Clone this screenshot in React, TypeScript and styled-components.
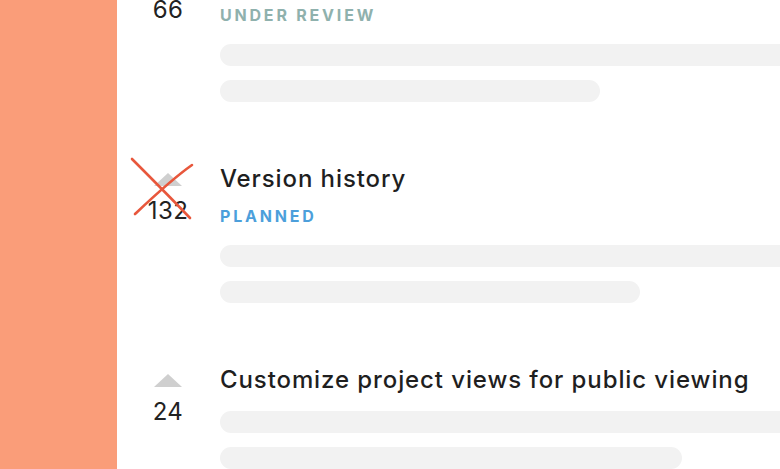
import React from "react";
import styled, { createGlobalStyle } from "styled-components";

type Status = "review" | "planned" | "none";

type Post = {
  title: string;
  votes: number;
  status: Status;
  shortBar: number;
  crossed?: boolean;
};

const posts: Post[] = [
  { title: "Dark mode for the editor", votes: 66, status: "review", shortBar: 380 },
  { title: "Version history", votes: 132, status: "planned", shortBar: 420, crossed: true },
  { title: "Customize project views for public viewing", votes: 24, status: "none", shortBar: 462 },
];

const statusText: Record<Status, string> = {
  review: "Under review",
  planned: "Planned",
  none: "",
};

const App = () => {
  return (
    <>
      <GlobalStyle />
      <Page>
        <Sidebar />
        <Main>
          <PostList>
            {posts.map((post) => (
              <PostRow key={post.title}>
                <VoteColumn>
                  <UpArrow />
                  <VoteCount>{post.votes}</VoteCount>
                  {post.crossed && (
                    <Cross viewBox="0 0 64 64">
                      <path d="M-4 -6 C 14 12, 34 32, 54 53" />
                      <path d="M-1 49 C 17 32, 36 14, 56 0" />
                    </Cross>
                  )}
                </VoteColumn>
                <PostBody>
                  <PostTitle>{post.title}</PostTitle>
                  {post.status !== "none" && (
                    <StatusLabel status={post.status}>{statusText[post.status]}</StatusLabel>
                  )}
                  <Placeholder width={640} top={post.status === "none" ? 17 : 19} />
                  <Placeholder width={post.shortBar} top={14} />
                </PostBody>
              </PostRow>
            ))}
          </PostList>
        </Main>
      </Page>
    </>
  );
};

export default App;

const GlobalStyle = createGlobalStyle`
  html, body {
    margin: 0;
    padding: 0;
    background: #ffffff;
    overflow: hidden;
  }
  body {
    font-family: Inter, "Liberation Sans", sans-serif;
  }
`;

const Page = styled.div`
  display: flex;
  width: 780px;
  height: 469px;
  overflow: hidden;
`;

const Sidebar = styled.div`
  flex: 0 0 117px;
  background-color: #fa9d79;
`;

const Main = styled.div`
  flex: 1;
  padding-left: 19px;
  overflow: hidden;
`;

const PostList = styled.div`
  display: flex;
  flex-direction: column;
  gap: 63px;
  margin-top: -36px;
`;

const PostRow = styled.div`
  display: flex;
  gap: 20px;
`;

const VoteColumn = styled.div`
  position: relative;
  flex: 0 0 64px;
  display: flex;
  flex-direction: column;
  align-items: center;
  padding-top: 8px;
`;

const UpArrow = styled.div`
  width: 0;
  height: 0;
  border-left: 14.5px solid transparent;
  border-right: 14.5px solid transparent;
  border-bottom: 13px solid #cfcfcf;
`;

const VoteCount = styled.div`
  margin-top: 11px;
  font-size: 24px;
  line-height: 28px;
  letter-spacing: 0.4px;
  color: #222222;
`;

const Cross = styled.svg`
  position: absolute;
  left: 0;
  top: 0;
  width: 64px;
  height: 64px;
  overflow: visible;
  fill: none;
  stroke: #e8573c;
  stroke-width: 2.6;
  stroke-linecap: round;
`;

const PostBody = styled.div`
  display: flex;
  flex-direction: column;
  min-width: 0;
`;

const PostTitle = styled.div`
  font-size: 24px;
  line-height: 28px;
  font-weight: 500;
  letter-spacing: 0.9px;
  color: #1f1f1f;
  white-space: nowrap;
`;

const StatusLabel = styled.div<{ status: Status }>`
  margin-top: 14px;
  font-size: 16px;
  line-height: 19px;
  font-weight: 700;
  letter-spacing: 2.8px;
  text-transform: uppercase;
  color: ${({ status }) => (status === "planned" ? "#4c9fdb" : "#8fb1ad")};
`;

const Placeholder = styled.div<{ width: number; top: number }>`
  flex: 0 0 auto;
  width: ${({ width }) => width}px;
  height: 22px;
  margin-top: ${({ top }) => top}px;
  border-radius: 11px;
  background-color: #f2f2f2;
`;
